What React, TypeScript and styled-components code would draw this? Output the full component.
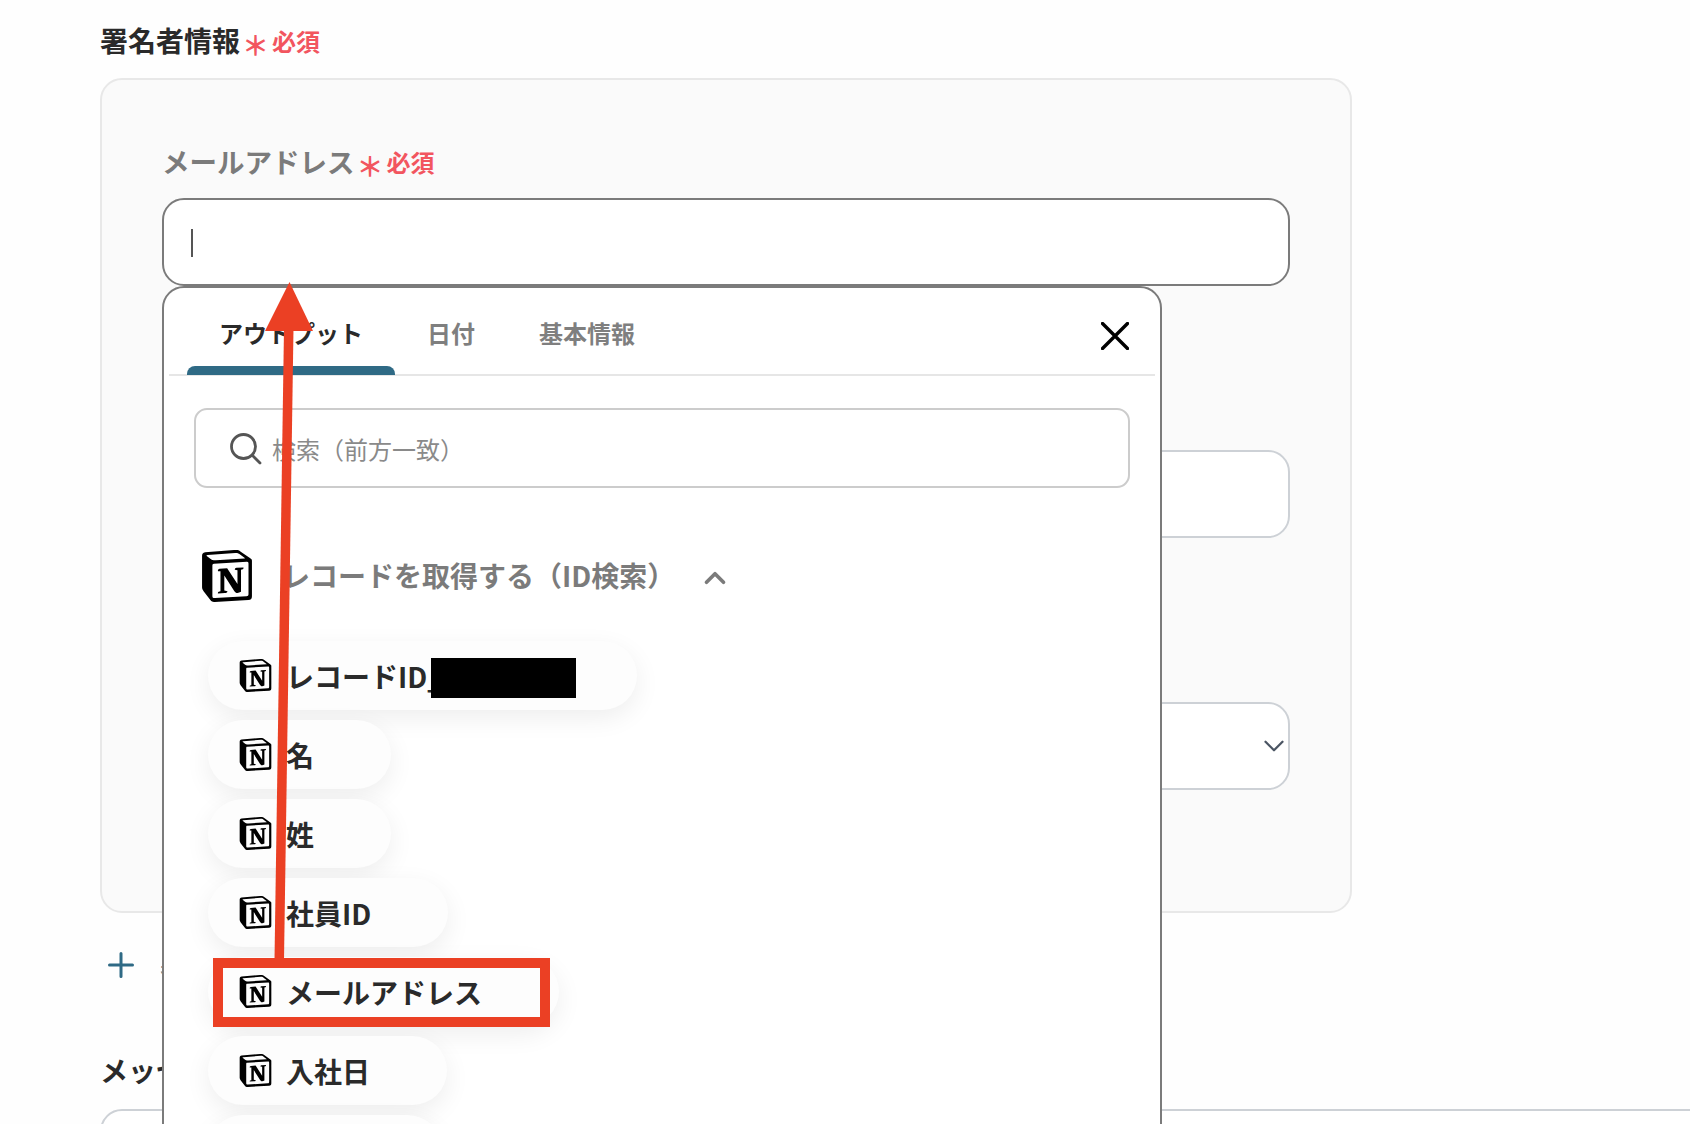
import { ChevronDown, ChevronUp } from 'lucide-react';
import { SiNotion } from 'react-icons/si';
import styled, { createGlobalStyle } from 'styled-components';

const GlobalStyle = createGlobalStyle`
  html, body {
    margin: 0;
    padding: 0;
    background: #fefefe;
    overflow: hidden;
  }
  * {
    box-sizing: border-box;
  }
  body {
    font-family: "Noto Sans CJK JP", "Liberation Sans", sans-serif;
    color: #2a2a2a;
  }
`

const Page = styled.div`
  position: relative;
  width: 1690px;
  height: 1124px;
  overflow: hidden;
  padding: 20px 0 0 100px;
`

const SectionLabel = styled.div`
  display: flex;
  align-items: center;
  height: 40px;
  font-size: 28px;
  font-weight: 700;
  line-height: 40px;
  color: #2a2a2a;
`

const FieldLabel = styled(SectionLabel)`
  height: 32px;
  font-size: 27.5px;
  line-height: 32px;
  color: #7b7b7b;
  margin-bottom: 21px;
`

const Required = styled.span`
  display: inline-flex;
  align-items: center;
  margin-left: 2px;
  font-size: 24px;
  font-weight: 700;
  color: #f2555f;
  transform: translateY(1px);
`

const Asterisk = styled.span`
  font-size: 27px;
  font-weight: 700;
  margin-right: 3px;
  line-height: 1;
  transform: translateY(3px);
`

const Panel = styled.div`
  width: 1252px;
  height: 835px;
  margin-top: 18px;
  padding: 65px 60px 0;
  background: #fafafa;
  border: 2px solid #e8e8e8;
  border-radius: 22px;
`

const FieldStack = styled.div`
  display: flex;
  flex-direction: column;
  gap: 164px;
`

const Field = styled.div`
  position: relative;
`

const Input = styled.div<{ $focused?: boolean }>`
  position: relative;
  display: flex;
  align-items: center;
  justify-content: flex-end;
  height: 88px;
  padding: 0 0 0 28px;
  background: #fff;
  border: 2px solid ${(p) => (p.$focused ? '#7b7b7b' : '#cdd1d6')};
  border-radius: 22px;
  color: #4b5563;
`

const SelectChevron = styled(ChevronDown)`
  margin-right: -3px;
`

const Caret = styled.span`
  position: absolute;
  left: 27px;
  top: 29px;
  width: 2px;
  height: 28px;
  background: #555;
`

const Dropdown = styled.div`
  position: absolute;
  z-index: 2;
  left: 0;
  top: 88px;
  width: 1000px;
  height: 900px;
  padding: 0 5px;
  background: #fff;
  border: 2px solid #7b7b7b;
  border-radius: 22px;
`

const TabBar = styled.div`
  display: flex;
  align-items: flex-end;
  height: 88px;
  padding: 0 26px 0 18px;
  border-bottom: 2px solid #e6e6e6;
`

const Tab = styled.div<{ $active?: boolean }>`
  position: relative;
  height: 86px;
  padding: 28px 32px 0;
  font-size: 24px;
  font-weight: 700;
  line-height: 34px;
  color: ${(p) => (p.$active ? '#2a2a2a' : '#7f7f7f')};

  ${(p) =>
    p.$active &&
    `&::after {
      content: "";
      position: absolute;
      left: 0;
      right: 0;
      bottom: -1px;
      height: 9px;
      background: #2f6a85;
      border-radius: 8px 8px 0 0;
    }`}
`

const CloseIcon = styled.svg`
  margin: 0 0 24px auto;
`

const DropdownBody = styled.div`
  padding: 32px 25px 0;
`

const SearchBox = styled.div`
  display: flex;
  align-items: center;
  gap: 10px;
  height: 80px;
  padding: 0 0 0 33px;
  border: 2px solid #cccccc;
  border-radius: 13px;
  font-size: 24px;
  color: #8a8a8a;
`

const GroupHeader = styled.div`
  display: flex;
  align-items: center;
  margin: 61px 0 0 7px;
  height: 54px;
  font-size: 28px;
  font-weight: 700;
  color: #7b7b7b;
`

const GroupTitle = styled.span`
  margin-left: 29px;
  margin-right: 23px;
  transform: translateY(-1px);
`

const GroupChevron = styled(ChevronUp)`
  transform: translateY(2px);
`

const PillList = styled.div`
  display: flex;
  flex-direction: column;
  align-items: flex-start;
  gap: 10px;
  margin: 38px 0 0 14px;
`

const Pill = styled.div<{ $minWidth?: number }>`
  position: relative;
  display: flex;
  align-items: center;
  flex-shrink: 0;
  gap: 14px;
  height: 69px;
  min-width: ${(p) => p.$minWidth ?? 0}px;
  padding: 0 77px 0 31px;
  background: #fdfdfd;
  border-radius: 35px;
  box-shadow: 0 8px 26px rgba(0, 0, 0, 0.07);
  font-size: 28px;
  font-weight: 700;
  white-space: nowrap;
  color: #2a2a2a;
`

const PillText = styled.span<{ $reserve?: number }>`
  display: inline-block;
  min-width: ${(p) => p.$reserve ?? 0}px;
`

const Redaction = styled.span`
  position: absolute;
  left: 223px;
  top: 17px;
  width: 145px;
  height: 40px;
  background: #000;
`

const AddRow = styled.div`
  display: flex;
  align-items: center;
  gap: 26px;
  height: 40px;
  margin: 32px 0 0 8px;
  font-size: 27px;
  font-weight: 500;
  color: #2f6a85;
`

const MessageLabel = styled(SectionLabel)`
  margin-top: 65px;
`

const MessageInput = styled.div`
  width: 1700px;
  height: 120px;
  margin-top: 19px;
  background: #fff;
  border: 2px solid #cdd1d6;
  border-radius: 22px;
`

const Annotation = styled.svg`
  position: absolute;
  z-index: 5;
  left: 0;
  top: 0;
  pointer-events: none;
`

const Highlight = styled.div`
  position: absolute;
  z-index: 4;
  left: 213px;
  top: 958px;
  width: 337px;
  height: 69px;
  border: 10px solid #eb4024;
`

const pills = ['名', '姓', '社員ID', 'メールアドレス', '入社日']

const RequiredMark = () => (
  <Required>
    <Asterisk>＊</Asterisk>必須
  </Required>
)

const App = (): JSX.Element => {
  return (
    <>
      <GlobalStyle />
      <Page>
        <SectionLabel>
          署名者情報
          <RequiredMark />
        </SectionLabel>

        <Panel>
          <FieldStack>
            <Field>
              <FieldLabel>
                メールアドレス
                <RequiredMark />
              </FieldLabel>
              <Field>
                <Input $focused>
                  <Caret />
                </Input>
                <Dropdown>
                  <TabBar>
                    <Tab $active>アウトプット</Tab>
                    <Tab>日付</Tab>
                    <Tab>基本情報</Tab>
                    <CloseIcon width="28" height="28" viewBox="0 0 28 28" fill="none" stroke="#000" strokeWidth="3.4" strokeLinecap="round">
                      <path d="M1.5 1.5 26.5 26.5M26.5 1.5 1.5 26.5" />
                    </CloseIcon>
                  </TabBar>
                  <DropdownBody>
                    <SearchBox>
                      <svg width="33" height="33" viewBox="0 0 33 33" fill="none" stroke="#555" strokeWidth="2.8" strokeLinecap="round">
                        <circle cx="14.5" cy="14.5" r="12" />
                        <path d="M23.5 23.5 31 31" />
                      </svg>
                      検索（前方一致）
                    </SearchBox>
                    <GroupHeader>
                      <SiNotion size={52} color="#000" />
                      <GroupTitle>レコードを取得する（ID検索）</GroupTitle>
                      <GroupChevron size={34} color="#7b7b7b" strokeWidth={2.6} />
                    </GroupHeader>
                    <PillList>
                      <Pill>
                        <SiNotion size={33} color="#000" />
                        <PillText $reserve={274}>レコードID_</PillText>
                        <Redaction />
                      </Pill>
                      {pills.map((name) => (
                        <Pill key={name}>
                          <SiNotion size={33} color="#000" />
                          <PillText>{name}</PillText>
                        </Pill>
                      ))}
                      <Pill $minWidth={234} />
                    </PillList>
                  </DropdownBody>
                </Dropdown>
              </Field>
            </Field>
            <Input />
            <Input>
              <SelectChevron size={34} strokeWidth={1.6} />
            </Input>
          </FieldStack>
        </Panel>

        <AddRow>
          <svg width="26" height="26" viewBox="0 0 26 26" fill="none" stroke="#2f6a85" strokeWidth="3" strokeLinecap="round">
            <path d="M13 1.5v23M1.5 13h23" />
          </svg>
          署名者を追加
        </AddRow>

        <MessageLabel>メッセージ</MessageLabel>
        <MessageInput />

        <Highlight />
        <Annotation width="1690" height="1124" viewBox="0 0 1690 1124">
          <path d="M274.5 960 284 328H293.5L284 960Z" fill="#eb4024" />
          <path d="M289.5 282 313 331H265Z" fill="#eb4024" />
        </Annotation>
      </Page>
    </>
  )
}

export default App
